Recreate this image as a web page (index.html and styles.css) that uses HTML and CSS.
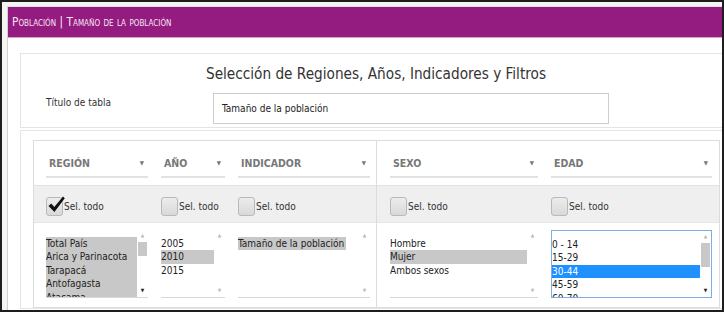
FILE: index.html
```html
<!DOCTYPE html>
<html lang="es">
<head>
  <meta charset="UTF-8" />
  <title>Tamaño de la población</title>
  <link rel="stylesheet" href="styles.css">
</head>
<body>

<div class="panel">
  <div class="topbar">Población | Tamaño de la población</div>

  <div class="card-top">
    <h1>Selección de Regiones, Años, Indicadores y Filtros</h1>
    <div class="form-row">
      <label class="form-label">Título de tabla</label>
      <div class="text-input">Tamaño de la población</div>
    </div>
  </div>

  <div class="card-body">
    <div class="filter-box">

      <div class="filter-group left">
        <div class="row-head">
          <div class="head c-region">REGIÓN <span class="caret">▼</span></div>
          <div class="head c-year">AÑO <span class="caret">▼</span></div>
          <div class="head c-ind">INDICADOR <span class="caret">▼</span></div>
        </div>
        <div class="row-check">
          <div class="check c-region">
            <span class="box">
              <svg width="19" height="19" viewBox="0 0 19 19"><path d="M1.5 11 L4.2 8.4 L7.3 12 L16 1.5 L17.8 3.2 L7.4 17 Z" fill="#111"/></svg>
            </span>Sel. todo
          </div>
          <div class="check c-year"><span class="box"></span>Sel. todo</div>
          <div class="check c-ind"><span class="box"></span>Sel. todo</div>
        </div>
        <div class="row-list">
          <div class="list c-region">
            <div class="items">
              <div class="item sel">Total País</div>
              <div class="item sel">Arica y Parinacota</div>
              <div class="item sel">Tarapacá</div>
              <div class="item sel">Antofagasta</div>
              <div class="item sel">Atacama</div>
            </div>
            <div class="scroll"><span class="up">▲</span><span class="thumb"></span><span class="down dark">▼</span></div>
          </div>
          <div class="list c-year">
            <div class="items">
              <div class="item">2005</div>
              <div class="item sel">2010</div>
              <div class="item">2015</div>
            </div>
            <div class="scroll"><span class="up">▲</span><span class="down">▼</span></div>
          </div>
          <div class="list c-ind">
            <div class="items">
              <div class="item"><span class="sel">Tamaño de la población</span></div>
            </div>
            <div class="scroll"><span class="up">▲</span><span class="down">▼</span></div>
          </div>
        </div>
      </div>

      <div class="filter-group right">
        <div class="row-head">
          <div class="head c-sexo">SEXO <span class="caret">▼</span></div>
          <div class="head c-edad">EDAD <span class="caret">▼</span></div>
        </div>
        <div class="row-check">
          <div class="check c-sexo"><span class="box"></span>Sel. todo</div>
          <div class="check c-edad"><span class="box"></span>Sel. todo</div>
        </div>
        <div class="row-list">
          <div class="list c-sexo">
            <div class="items">
              <div class="item">Hombre</div>
              <div class="item sel">Mujer</div>
              <div class="item">Ambos sexos</div>
            </div>
            <div class="scroll"><span class="up">▲</span><span class="down">▼</span></div>
          </div>
          <div class="list c-edad focused">
            <div class="items">
              <div class="item">0 - 14</div>
              <div class="item">15-29</div>
              <div class="item active">30-44</div>
              <div class="item">45-59</div>
              <div class="item">60-70</div>
            </div>
            <div class="scroll"><span class="up">▲</span><span class="thumb tall"></span><span class="down dark">▼</span></div>
          </div>
        </div>
      </div>

    </div>
  </div>
</div>

</body>
</html>
```

FILE: styles.css
```css
* {
  box-sizing: border-box;
  margin: 0;
  padding: 0;
}

body {
  width: 724px;
  height: 312px;
  overflow: hidden;
  border: 2px solid #1d1d1d;
  background: #f4f4f4;
  font-family: "DejaVu Sans", Verdana, sans-serif;
  font-stretch: condensed;
  font-size: 10px;
  color: #222;
}

.panel {
  width: 760px;
  height: 320px;
  margin: 4px 0 0 5px;
  border-left: 1px solid #cfcfcf;
  border-top: 1px solid #e2e2e2;
  background: #fff;
}

.topbar {
  height: 31px;
  padding: 6px 0 0 4px;
  background: #941b80;
  border-bottom: 1px solid #d9a3cf;
  color: #f6e6f3;
  font-size: 11.8px;
  font-variant: small-caps;
  line-height: 18px;
}

/* top part of the card */
.card-top {
  width: 712px;
  margin: 15px 0 0 12px;
  border: 1px solid #e4e4e4;
  padding: 10px 0 3px;
}

h1 {
  text-align: center;
  font-size: 15.2px;
  font-weight: normal;
  line-height: 20px;
  color: #333;
}

.form-row {
  display: flex;
  margin-top: 9px;
  padding-left: 25px;
}

.form-label {
  width: 167px;
  padding-top: 4px;
  color: #333;
}

.text-input {
  width: 396px;
  height: 31px;
  border: 1px solid #cdcdcd;
  padding: 9px 0 0 8px;
  color: #222;
}

/* filter part */
.card-body {
  width: 712px;
  margin: 2px 0 0 12px;
  border: 1px solid #e4e4e4;
  padding: 9px 0 0 12px;
}

.filter-box {
  display: flex;
  width: 687px;
  height: 168px;
  border: 1px solid #dcdcdc;
}

.filter-group {
  display: flex;
  flex-direction: column;
}

.filter-group.left {
  width: 343px;
  border-right: 1px solid #dcdcdc;
}

.filter-group.right {
  flex: 1;
}

.row-head,
.row-check,
.row-list {
  display: flex;
  gap: 13px;
  padding-left: 12px;
}

.right .row-head,
.right .row-check,
.right .row-list {
  padding-left: 13px;
}

.row-head {
  height: 44px;
}

.row-check {
  height: 38px;
  padding-top: 11px;
  background: #efefef;
  border-top: 1px solid #e2e2e2;
  border-bottom: 1px solid #e6e6e6;
}

.row-list {
  padding-top: 7px;
}

.c-region { width: 102px; }
.c-year { width: 64px; }
.c-ind { width: 132px; }
.c-sexo { width: 148px; }
.c-edad { width: 161px; }

.head {
  display: flex;
  height: 37px;
  padding: 15px 4px 0 3px;
  border-bottom: 2px solid #e2e2e2;
  font-weight: bold;
  font-size: 10.5px;
  line-height: 14px;
  color: #777;
}

.caret {
  margin-left: auto;
  font-size: 6px;
  color: #777;
}

.check {
  display: flex;
  align-items: center;
  height: 19px;
  color: #333;
}

.box {
  position: relative;
  width: 17px;
  height: 19px;
  margin-right: 1px;
  border: 1px solid #b9b9b9;
  border-radius: 3px;
  background: linear-gradient(#ececec, #d9d9d9);
}

.box svg {
  position: absolute;
  left: 0;
  top: -3px;
}

.list {
  display: flex;
  height: 68px;
  overflow: hidden;
  border-bottom: 1px solid #d8d8d8;
}

.list.focused {
  border: 1px solid #7eaee6;
}

.items {
  flex: 1;
  padding-top: 7px;
  overflow: hidden;
}

.item {
  height: 13.4px;
  line-height: 13.4px;
  white-space: nowrap;
  color: #222;
}

.item.sel,
.item .sel {
  background: #c8c8c8;
}

.item .sel {
  display: inline-block;
  padding-right: 2px;
}

.item.active {
  background: #1e90ff;
  color: #fff;
}

.scroll {
  display: flex;
  flex-direction: column;
  align-items: center;
  width: 11px;
  padding-top: 2px;
  font-size: 5px;
  color: #bbb;
}

.thumb {
  width: 9px;
  height: 14px;
  margin-top: 4px;
  background: #c8c8c8;
}

.thumb.tall {
  height: 24px;
}

.down {
  margin-top: auto;
  padding-bottom: 4px;
}

.down.dark {
  color: #222;
}
```
